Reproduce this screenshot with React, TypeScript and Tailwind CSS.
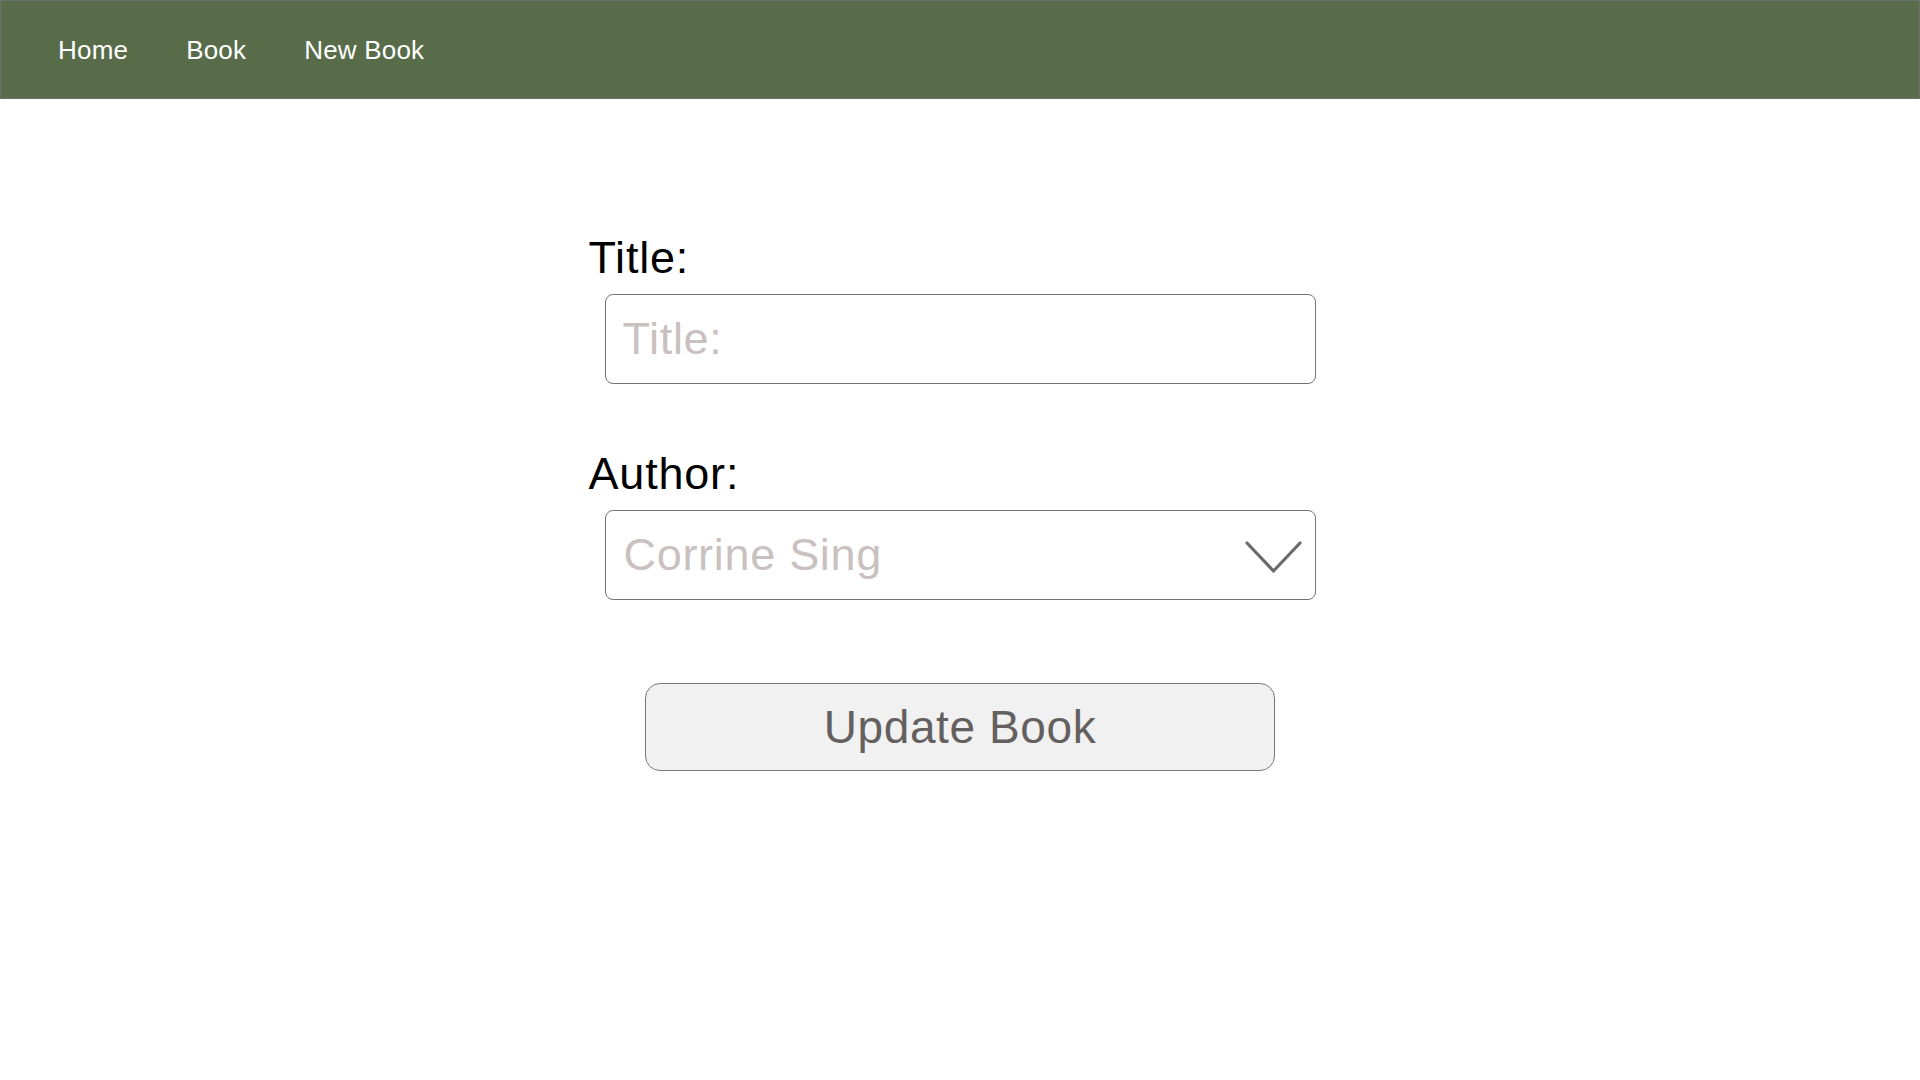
import { useState } from "react";

const navLinks = ["Home", "Book", "New Book"];

function Chevron() {
  return (
    <svg width="57" height="34" viewBox="0 0 57 34" fill="none" className="pointer-events-none">
      <path d="M2 2 L28.5 30 L55 2" stroke="#6b6b6b" strokeWidth="3.2" strokeLinecap="round" strokeLinejoin="round" />
    </svg>
  );
}

export default function App() {
  const [title, setTitle] = useState("");
  const [author, setAuthor] = useState("Corrine Sing");

  return (
    <div className="min-h-screen bg-white font-['Liberation_Sans',Arial,sans-serif]">
      <nav className="h-[99px] bg-[#586c4a] border border-[#6e6e6e] flex items-center gap-[58px] pl-[57px]">
        {navLinks.map((l) => (
          <a key={l} href="#" className="text-white text-[26px] tracking-[0.2px] leading-none">
            {l}
          </a>
        ))}
      </nav>

      <form className="w-[743px] mx-auto pt-[133px]" onSubmit={(e) => e.preventDefault()}>
        <label className="block text-[45px] tracking-[0.8px] leading-[52px] text-black mb-[10px]">Title:</label>
        <input
          value={title}
          onChange={(e) => setTitle(e.target.value)}
          placeholder="Title:"
          className="ml-[16px] w-[711px] h-[90px] border border-[#737373] rounded-[8px] pl-[17px] text-[45px] tracking-[0.7px] text-[#555] placeholder:text-[#c9c0c0] outline-none"
        />

        <label className="block text-[45px] tracking-[0.8px] leading-[52px] text-black mt-[64px] mb-[10px]">Author:</label>
        <div className="relative ml-[16px] w-[711px] h-[90px]">
          <select
            value={author}
            onChange={(e) => setAuthor(e.target.value)}
            className="appearance-none w-full h-full border border-[#737373] rounded-[8px] pl-[18px] text-[45px] tracking-[0.7px] text-[#c9c0c0] bg-white outline-none"
          >
            <option>Corrine Sing</option>
          </select>
          <div className="absolute right-[14px] top-[31px]">
            <Chevron />
          </div>
        </div>

        <div className="flex justify-center mt-[83px]">
          <button
            type="submit"
            className="w-[630px] h-[88px] bg-[#f1f1f1] border border-[#777] rounded-[15px] text-[46px] tracking-[0.6px] text-[#646060]"
          >
            Update Book
          </button>
        </div>
      </form>
    </div>
  );
}
